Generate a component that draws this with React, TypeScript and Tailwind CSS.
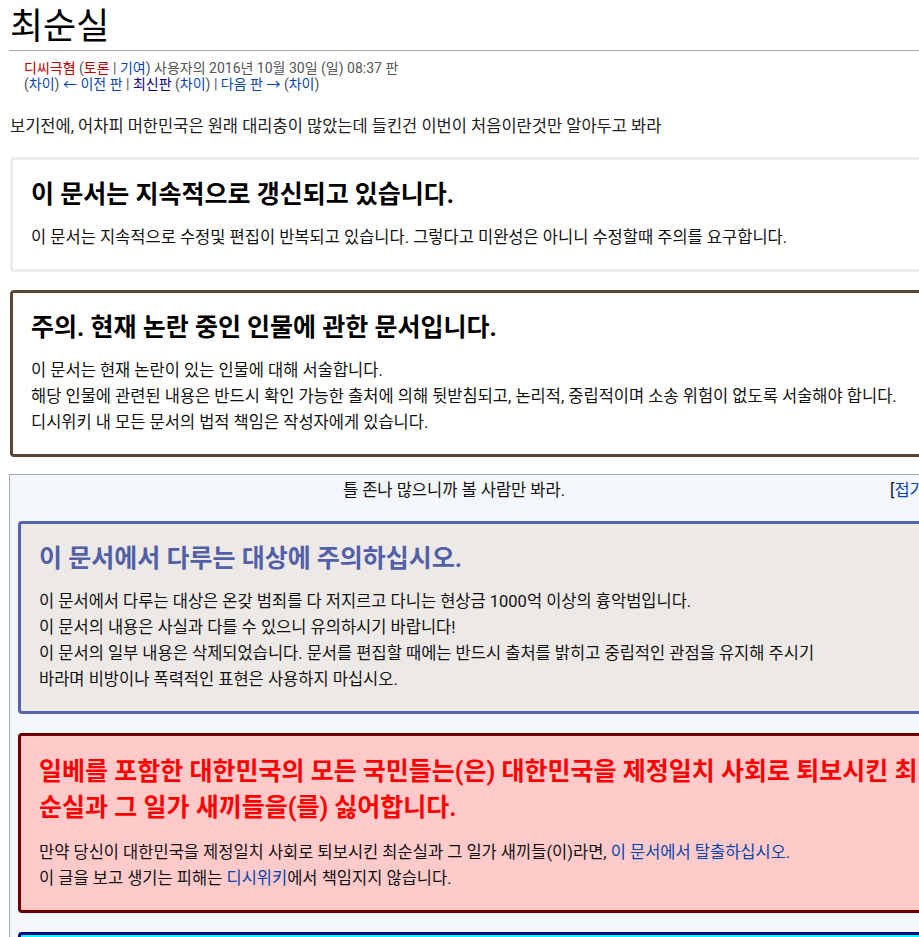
const FONT = 'font-["Roboto","Noto_Sans_CJK_KR",sans-serif]';

function Notice({
  border,
  bg,
  title,
  titleClass,
  bodyClass = 'mt-[13px]',
  children,
}: {
  border: string;
  bg: string;
  title: React.ReactNode;
  titleClass: string;
  bodyClass?: string;
  children: React.ReactNode;
}) {
  return (
    <div className={`rounded-[4px] border-[3px] ${border} ${bg} pl-[18px] pr-4 pt-[18px] pb-[18px]`}>
      <div className={`font-bold ${titleClass}`}>{title}</div>
      <div className={`${bodyClass} text-[16.5px] leading-[26px] text-[#111]`}>{children}</div>
    </div>
  );
}

export default function App() {
  return (
    <div className={`w-full overflow-hidden bg-white ${FONT} text-[#222]`}>
      <div className="w-[960px]">
        <h1 className="mx-[9px] border-b border-[#a7a7a7] pl-px pt-[6px] pb-[2px] text-[36px] leading-[42px] text-black">
          최순실
        </h1>

        <div className="pl-[24px] pt-[9px] text-[14px] leading-[16px] text-[#555]">
          <div>
            <span className="text-[#ba0000]">디씨극혐</span> (<span className="text-[#ba0000]">토론</span> |{' '}
            <span className="text-[#0645ad]">기여</span>) 사용자의 2016년 10월 30일 (일) 08:37 판
          </div>
          <div>
            (<span className="text-[#0645ad]">차이</span>) <span className="text-[#0645ad]">← 이전 판</span> |{' '}
            <span className="text-[#0b0080]">최신판</span> (<span className="text-[#0645ad]">차이</span>) |{' '}
            <span className="text-[#0645ad]">다음 판 →</span> (<span className="text-[#0645ad]">차이</span>)
          </div>
        </div>

        <p className="mt-[24px] pl-[10px] text-[16.5px] leading-[22px] text-[#222]">
          보기전에, 어차피 머한민국은 원래 대리충이 많았는데 들킨건 이번이 처음이란것만 알아두고 봐라
        </p>

        <div className="ml-[10px] mt-[19px] flex flex-col gap-[18px]">
          <Notice
            border="border-[#ececec]"
            bg="bg-white"
            titleClass="text-[25px] leading-[34px] text-black"
            title="이 문서는 지속적으로 갱신되고 있습니다."
          >
            이 문서는 지속적으로 수정및 편집이 반복되고 있습니다. 그렇다고 미완성은 아니니 수정할때 주의를 요구합니다.
          </Notice>

          <Notice
            border="border-[#5b4636]"
            bg="bg-white"
            titleClass="text-[25px] leading-[34px] text-black"
            title="주의. 현재 논란 중인 인물에 관한 문서입니다."
          >
            <div>이 문서는 현재 논란이 있는 인물에 대해 서술합니다.</div>
            <div>
              해당 인물에 관련된 내용은 반드시 확인 가능한 출처에 의해 뒷받침되고, 논리적, 중립적이며 소송 위험이 없도록 서술해야 합니다.
            </div>
            <div>디시위키 내 모든 문서의 법적 책임은 작성자에게 있습니다.</div>
          </Notice>
        </div>

        <div className="ml-[9px] mt-[17px] border border-[#aaa] bg-[#f3f6fa] px-2 pt-[4px]">
          <div className="flex text-[16.5px] leading-[24px] text-[#111]">
            <div className="flex-1 text-center">틀 존나 많으니까 볼 사람만 봐라.</div>
            <div className="w-[61px]">
              [<span className="text-[#0645ad]">접기</span>]
            </div>
          </div>

          <div className="mt-[18px] flex flex-col gap-[19px]">
            <Notice
              border="border-[#5664ac]"
              bg="bg-[#ede9e6]"
              titleClass="text-[25px] leading-[34px] text-[#5260a8]"
              title="이 문서에서 다루는 대상에 주의하십시오."
            >
              <div>이 문서에서 다루는 대상은 온갖 범죄를 다 저지르고 다니는 현상금 1000억 이상의 흉악범입니다.</div>
              <div>이 문서의 내용은 사실과 다를 수 있으니 유의하시기 바랍니다!</div>
              <div>
                이 문서의 일부 내용은 삭제되었습니다. 문서를 편집할 때에는 반드시 출처를 밝히고 중립적인 관점을 유지해 주시기
              </div>
              <div>바라며 비방이나 폭력적인 표현은 사용하지 마십시오.</div>
            </Notice>

            <Notice
              border="border-[#6b0000]"
              bg="bg-[#ffcaca]"
              titleClass="text-[25px] leading-[36px] text-[#ff0000] pr-[8px]"
              bodyClass="mt-[14px]"
              title="일베를 포함한 대한민국의 모든 국민들는(은) 대한민국을 제정일치 사회로 퇴보시킨 최순실과 그 일가 새끼들을(를) 싫어합니다."
            >
              <div>
                만약 당신이 대한민국을 제정일치 사회로 퇴보시킨 최순실과 그 일가 새끼들(이)라면,{' '}
                <span className="text-[#0645ad]">이 문서에서 탈출하십시오.</span>
              </div>
              <div>
                이 글을 보고 생기는 피해는 <span className="text-[#0645ad]">디시위키</span>에서 책임지지 않습니다.
              </div>
            </Notice>

            <div className="h-[60px] rounded-[4px] border-[3px] border-[#000080] bg-[#00ffff]" />
          </div>
        </div>
      </div>
    </div>
  );
}
